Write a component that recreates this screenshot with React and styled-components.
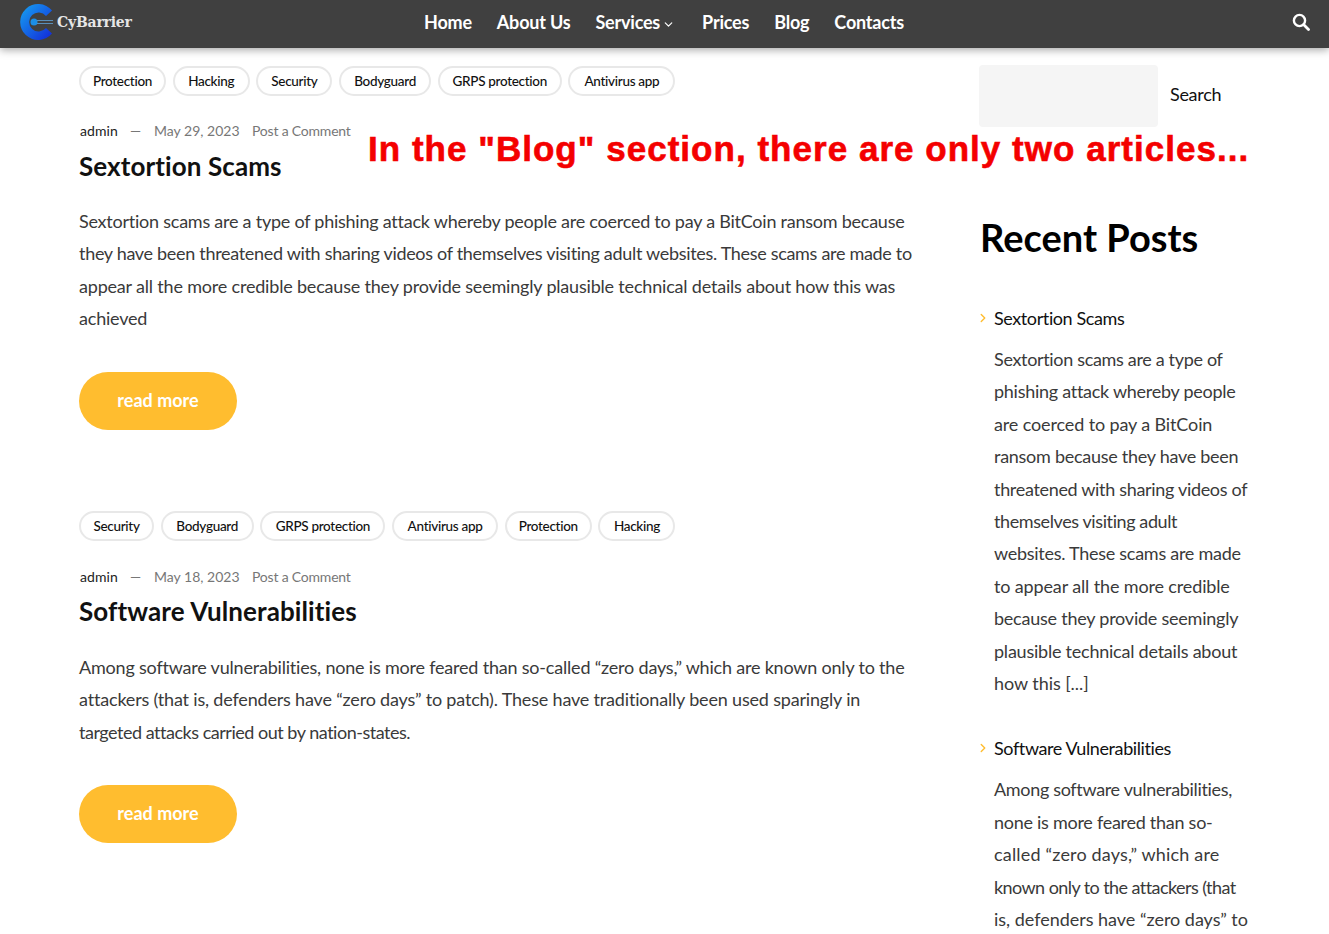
import React from "react";
import styled, { createGlobalStyle } from "styled-components";
import { ChevronDown, ChevronRight } from "lucide-react";

const Global = createGlobalStyle`
  html, body { margin: 0; padding: 0; background: #fff; }
  body { font-family: "Lato", "Noto Sans", sans-serif; color: #333; }
  * { box-sizing: border-box; }
`;

const Page = styled.div`
  width: 1329px;
  height: 934px;
  overflow: hidden;
  position: relative;
`;

const Header = styled.header`
  height: 48px;
  background: #404040;
  box-shadow: 0 2px 8px rgba(0, 0, 0, 0.35);
  display: flex;
  align-items: center;
  padding: 0 19px 4px;
  position: relative;
  z-index: 2;
`;

const Brand = styled.div`
  display: flex;
  align-items: center;
  width: 405px;
  gap: 3px;
`;

const BrandName = styled.span`
  font-family: "DejaVu Serif", serif;
  font-weight: 700;
  font-size: 14px;
  letter-spacing: -0.2px;
  color: #e6e6e6;
`;

const Nav = styled.nav`
  display: flex;
  gap: 25px;
  align-items: center;
`;

const NavLink = styled.a`
  color: #fff;
  font-size: 18px;
  font-weight: 700;
  letter-spacing: -0.2px;
  display: flex;
  align-items: center;
  white-space: nowrap;
`;

const NavCaret = styled.span`
  display: flex;
  margin: 4px 2px 0 2px;
`;

const SearchBtn = styled.div`
  margin-left: auto;
  display: flex;
  color: #fff;
`;

const Body = styled.main`
  display: flex;
  padding: 17px 0 0 79px;
`;

const Content = styled.div`
  width: 900px;
  flex: none;
`;

const Article = styled.article`
  height: 444px;
`;

const Tags = styled.div`
  display: flex;
  gap: 6.7px;
  margin: 1px 0 0 0;
`;

const Tag = styled.span`
  height: 30px;
  border: 2px solid #e8e8e8;
  border-radius: 15px;
  display: flex;
  align-items: center;
  justify-content: center;
  width: ${(p) => p.$w}px;
  font-size: 13.5px;
  font-weight: 500;
  color: #111;
  letter-spacing: -0.3px;
  white-space: nowrap;
`;

const Meta = styled.div`
  display: flex;
  align-items: center;
  margin-top: ${(p) => p.$mt}px;
  padding-left: 1px;
  height: 20px;
  font-size: 14px;
  color: #777;
  white-space: nowrap;
`;

const Author = styled.span`
  color: #222;
  width: 50px;
  letter-spacing: 0.1px;
`;

const Dash = styled.span`
  color: #777;
  width: 24px;
`;

const MetaDate = styled.span`
  width: 98px;
`;

const MetaComment = styled.span`
  letter-spacing: -0.2px;
`;

const Title = styled.h2`
  margin: ${(p) => p.$mt}px 0 0;
  font-size: 26px;
  line-height: 32px;
  font-weight: 700;
  color: #111;
  letter-spacing: 0.1px;
`;

const Excerpt = styled.div`
  margin-top: ${(p) => p.$mt}px;
  font-size: 18px;
  line-height: 32.4px;
  color: #3a3a3a;
`;

const Line = styled.div`
  white-space: nowrap;
  letter-spacing: ${(p) => -0.2 + p.$ls}px;
`;

const ReadMore = styled.a`
  display: flex;
  align-items: center;
  justify-content: center;
  width: 158px;
  height: 58px;
  border-radius: 29px;
  background: #ffbd2f;
  color: #fff;
  font-size: 18px;
  font-weight: 700;
  padding-bottom: 2px;
  margin-top: 37px;
`;

const Sidebar = styled.aside`
  width: 270px;
  flex: none;
`;

const SearchRow = styled.div`
  display: flex;
  align-items: center;
  gap: 12px;
`;

const SearchInput = styled.div`
  width: 179px;
  height: 62px;
  background: #f5f5f5;
  border-radius: 4px;
`;

const SearchLabel = styled.span`
  font-size: 18px;
  color: #111;
  letter-spacing: -0.3px;
  margin-bottom: 4px;
`;

const SideTitle = styled.h2`
  margin: 87px 0 0 1px;
  font-size: 38px;
  line-height: 46px;
  font-weight: 700;
  color: #000;
`;

const Post = styled.div`
  margin-top: ${(p) => p.$mt}px;
  padding-left: 15px;
  position: relative;
`;

const Chevron = styled.span`
  position: absolute;
  left: -3px;
  top: 5px;
  color: #ffbd2f;
  display: flex;
`;

const PostTitle = styled.div`
  font-size: 18px;
  line-height: 24px;
  color: #111;
  letter-spacing: -0.4px;
`;

const PostText = styled.div`
  margin-top: 13px;
  font-size: 18px;
  line-height: 32.4px;
  color: #3a3a3a;
`;

const Callout = styled.div`
  position: absolute;
  left: 368px;
  top: 128px;
  font-family: "Liberation Sans", Arial, sans-serif;
  font-weight: 700;
  font-size: 35px;
  line-height: 42px;
  color: #f40000;
  letter-spacing: 1.03px;
  -webkit-text-stroke: 0.6px #f40000;
  white-space: nowrap;
`;

const Logo = () => (
  <svg width="35" height="36" viewBox="0 0 35 36">
    <defs>
      <linearGradient id="lg" x1="0" y1="0" x2="1" y2="1">
        <stop offset="0" stopColor="#16a4f2" />
        <stop offset="1" stopColor="#1326d8" />
      </linearGradient>
    </defs>
    <path d="M33 6.500A18 18 0 1 0 33 29.500L27 24A9.500 9.500 0 1 1 27 12Z" fill="url(#lg)" />
    <circle cx="15" cy="18" r="3.500" fill="#1b8fe8" />
    <path d="M18 16.500H34M18 19.500H34" stroke="#5a8fb8" strokeWidth="1.200" />
  </svg>
);

const SearchIcon = () => (
  <svg width="18" height="18" viewBox="0 0 18 18" fill="none" stroke="#fff">
    <circle cx="7.500" cy="7.500" r="5.600" strokeWidth="2.400" />
    <path d="M11.800 11.800L16.500 16.500" strokeWidth="2.800" strokeLinecap="round" />
  </svg>
);

const nav = ["Home", "About Us", "Services", "Prices", "Blog", "Contacts"];

const articles = [
  {
    tags: [["Protection", 87], ["Hacking", 77], ["Security", 76], ["Bodyguard", 92], ["GRPS protection", 124], ["Antivirus app", 107]],
    date: "May 29, 2023",
    title: "Sextortion Scams",
    gaps: [24, 10, 23],
    lines: [
      ["Sextortion scams are a type of phishing attack whereby people are coerced to pay a BitCoin ransom because", -0.04],
      ["they have been threatened with sharing videos of themselves visiting adult websites. These scams are made to", -0.11],
      ["appear all the more credible because they provide seemingly plausible technical details about how this was", 0.01],
      ["achieved", 0],
    ],
  },
  {
    tags: [["Security", 75], ["Bodyguard", 93], ["GRPS protection", 125], ["Antivirus app", 106], ["Protection", 87], ["Hacking", 77]],
    date: "May 18, 2023",
    title: "Software Vulnerabilities",
    gaps: [25, 9, 24],
    lines: [
      ["Among software vulnerabilities, none is more feared than so-called “zero days,” which are known only to the", 0],
      ["attackers (that is, defenders have “zero days” to patch). These have traditionally been used sparingly in", 0.02],
      ["targeted attacks carried out by nation-states.", -0.28],
    ],
  },
];

const posts = [
  {
    title: "Sextortion Scams",
    mt: 46,
    lines: [
      ["Sextortion scams are a type of", -0.13],
      ["phishing attack whereby people", -0.07],
      ["are coerced to pay a BitCoin", 0.07],
      ["ransom because they have been", -0.07],
      ["threatened with sharing videos of", -0.12],
      ["themselves visiting adult", -0.2],
      ["websites. These scams are made", -0.07],
      ["to appear all the more credible", 0.06],
      ["because they provide seemingly", -0.03],
      ["plausible technical details about", -0.03],
      ["how this [...]", 0.14],
    ],
  },
  {
    title: "Software Vulnerabilities",
    mt: 37,
    lines: [
      ["Among software vulnerabilities,", -0.13],
      ["none is more feared than so-", -0.07],
      ["called “zero days,” which are", 0.38],
      ["known only to the attackers (that", -0.37],
      ["is, defenders have “zero days” to", 0.18],
    ],
  },
];

export default function App() {
  return (
    <Page>
      <Global />
      <Header>
        <Brand>
          <Logo />
          <BrandName>CyBarrier</BrandName>
        </Brand>
        <Nav>
          {nav.map((n) => (
            <NavLink key={n}>
              {n}
              {n === "Services" && (
                <NavCaret>
                  <ChevronDown size={13} strokeWidth={2.2} />
                </NavCaret>
              )}
            </NavLink>
          ))}
        </Nav>
        <SearchBtn>
          <SearchIcon />
        </SearchBtn>
      </Header>
      <Body>
        <Content>
          {articles.map((a) => (
            <Article key={a.title}>
              <Tags>
                {a.tags.map(([t, w]) => (
                  <Tag key={t} $w={w}>{t}</Tag>
                ))}
              </Tags>
              <Meta $mt={a.gaps[0]}>
                <Author>admin</Author>
                <Dash>—</Dash>
                <MetaDate>{a.date}</MetaDate>
                <MetaComment>Post a Comment</MetaComment>
              </Meta>
              <Title $mt={a.gaps[1]}>{a.title}</Title>
              <Excerpt $mt={a.gaps[2]}>
                {a.lines.map(([l, ls]) => (
                  <Line key={l} $ls={ls}>{l}</Line>
                ))}
              </Excerpt>
              <ReadMore>read more</ReadMore>
            </Article>
          ))}
        </Content>
        <Sidebar>
          <SearchRow>
            <SearchInput />
            <SearchLabel>Search</SearchLabel>
          </SearchRow>
          <SideTitle>Recent Posts</SideTitle>
          {posts.map((p) => (
            <Post key={p.title} $mt={p.mt}>
              <Chevron>
                <ChevronRight size={14} strokeWidth={2.4} />
              </Chevron>
              <PostTitle>{p.title}</PostTitle>
              <PostText>
                {p.lines.map(([l, ls]) => (
                  <Line key={l} $ls={ls}>{l}</Line>
                ))}
              </PostText>
            </Post>
          ))}
        </Sidebar>
      </Body>
      <Callout>In the "Blog" section, there are only two articles...</Callout>
    </Page>
  );
}
